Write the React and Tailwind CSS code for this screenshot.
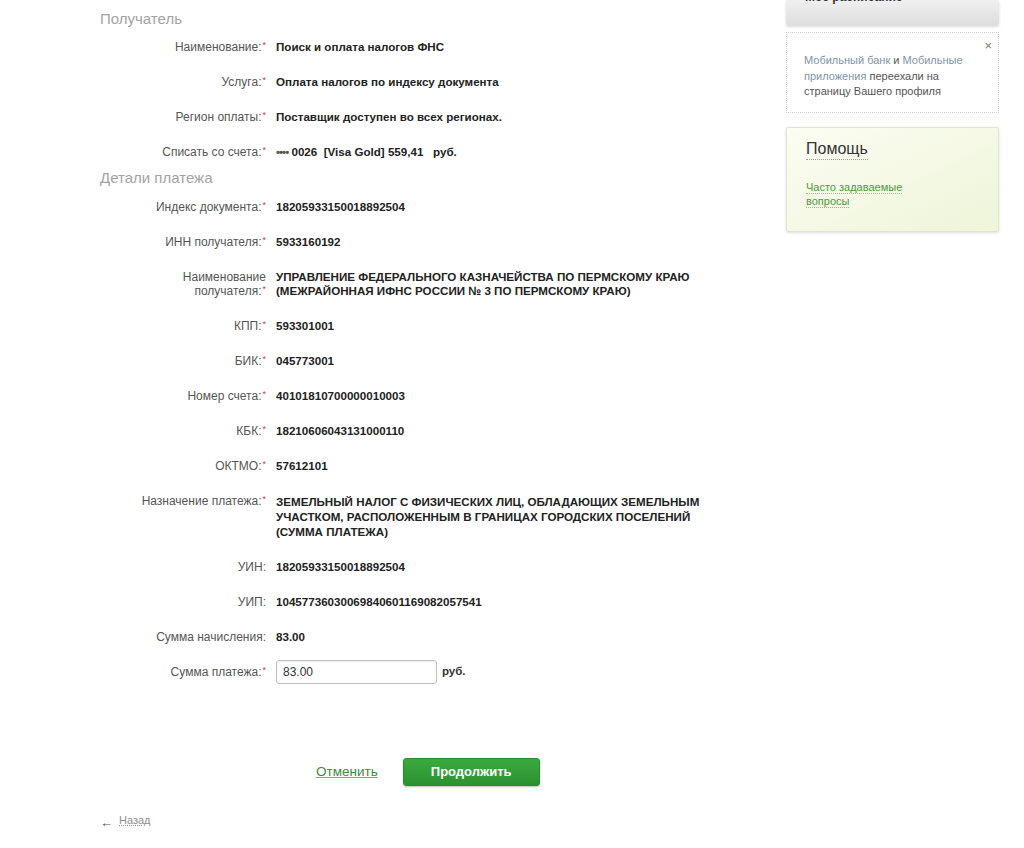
import React from 'react';

const Req = () => <span className="relative -top-[3px] ml-px align-baseline text-[9px] leading-[0] text-[#d23a3a]">*</span>;

const Row = ({ label, req = true, children, lines = 1 }) => (
  <div className="flex items-start">
    <div className="w-[166px] shrink-0 text-right text-[12px] leading-[14px] text-[#555]">
      {label}
      {req && <Req />}
    </div>
    <div
      className={
        'pl-[10px] text-[11.6px] font-bold text-[#222] ' + (lines > 2 ? 'leading-[15px]' : 'leading-[14px]')
      }
    >
      {children}
    </div>
  </div>
);

export default function App() {
  return (
    <div className="min-h-[848px] bg-white font-['Liberation_Sans',Arial,sans-serif]">
      <div className="flex pl-[100px]">
        {/* Main form */}
        <main className="w-[686px] shrink-0">
          <h2 className="pt-[10px] text-[15px] leading-[18px] text-[#a3a3a3]">Получатель</h2>
          <div className="mt-[12px] flex flex-col gap-[21px]">
            <Row label="Наименование:">Поиск и оплата налогов ФНС</Row>
            <Row label="Услуга:">Оплата налогов по индексу документа</Row>
            <Row label="Регион оплаты:">Поставщик доступен во всех регионах.</Row>
            <Row label="Списать со счета:">
              <span className="tracking-[-1px] text-[#555]">••••</span> 0026&nbsp;&nbsp;[Visa Gold] 559,41&nbsp;&nbsp;&nbsp;руб.
            </Row>
          </div>

          <h2 className="mt-[10px] text-[15px] leading-[18px] text-[#a3a3a3]">Детали платежа</h2>
          <div className="mt-[13px] flex flex-col gap-[21px]">
            <Row label="Индекс документа:">18205933150018892504</Row>
            <Row label="ИНН получателя:">5933160192</Row>
            <Row
              label={
                <>
                  Наименование
                  <br />
                  получателя:
                </>
              }
            >
              УПРАВЛЕНИЕ ФЕДЕРАЛЬНОГО КАЗНАЧЕЙСТВА ПО ПЕРМСКОМУ КРАЮ
              <br />
              (МЕЖРАЙОННАЯ ИФНС РОССИИ № 3 ПО ПЕРМСКОМУ КРАЮ)
            </Row>
            <Row label="КПП:">593301001</Row>
            <Row label="БИК:">045773001</Row>
            <Row label="Номер счета:">40101810700000010003</Row>
            <Row label="КБК:">18210606043131000110</Row>
            <Row label="ОКТМО:">57612101</Row>
            <Row label="Назначение платежа:" lines={3}>
              ЗЕМЕЛЬНЫЙ НАЛОГ С ФИЗИЧЕСКИХ ЛИЦ, ОБЛАДАЮЩИХ ЗЕМЕЛЬНЫМ
              <br />
              УЧАСТКОМ, РАСПОЛОЖЕННЫМ В ГРАНИЦАХ ГОРОДСКИХ ПОСЕЛЕНИЙ
              <br />
              (СУММА ПЛАТЕЖА)
            </Row>
            <Row label="УИН:" req={false}>18205933150018892504</Row>
            <Row label="УИП:" req={false}>10457736030069840601169082057541</Row>
            <Row label="Сумма начисления:" req={false}>83.00</Row>
          </div>

          <div className="mt-[16px] flex h-[24px] items-center">
            <div className="w-[166px] shrink-0 text-right text-[12px] leading-[14px] text-[#555]">
              Сумма платежа:
              <Req />
            </div>
            <input
              defaultValue="83.00"
              className="ml-[10px] h-[24px] w-[161px] rounded-[3px] border border-[#c2c2c2] px-[6px] text-[12px] text-[#333] shadow-[inset_0_1px_2px_rgba(0,0,0,0.08)] outline-none"
            />
            <span className="ml-[5px] text-[11.5px] font-bold text-[#333]">руб.</span>
          </div>

          <div className="mt-[74px] flex items-center pl-[216px]">
            <a href="#" className="text-[13.5px] text-[#3c8a3c] underline decoration-[#7aa87a]">
              Отменить
            </a>
            <button className="ml-[25px] h-[28px] w-[137px] rounded-[3px] border border-[#2a8a2f] bg-gradient-to-b from-[#3aa93f] to-[#2b9230] text-[13px] font-bold text-white shadow-[0_1px_2px_rgba(0,0,0,0.25)]">
              Продолжить
            </button>
          </div>

          <div className="mt-[24px] flex items-center gap-[6px] text-[11px] leading-[14px] text-[#8a8f95]">
            <span className="mt-[6px] text-[13px] leading-none text-[#555]">←</span>
            <a href="#" className="underline decoration-dotted">Назад</a>
          </div>
        </main>

        {/* Right column */}
        <aside className="w-[213px] shrink-0">
          <div className="h-[25px] overflow-hidden rounded-b-[2px] bg-gradient-to-b from-[#f0f0f0] to-[#dedede] shadow-[0_2px_3px_rgba(0,0,0,0.15)]">
            <div className="-mt-[11px] pl-[19px] text-[12px] font-bold leading-[16px] text-[#333]">Моё расписание</div>
          </div>

          <div className="relative mt-[7px] h-[81px] border border-dotted border-[#cfcfcf] pl-[17px] pr-[16px] pt-[20px] text-[11px] leading-[15.5px] text-[#555]">
            <span className="absolute right-[6px] top-[6px] text-[13px] leading-none text-[#777]">×</span>
            <p>
              <a href="#" className="text-[#7d95a6]">Мобильный банк</a> и{' '}
              <a href="#" className="text-[#7d95a6]">Мобильные приложения</a> переехали на страницу Вашего профиля
            </p>
          </div>

          <div className="mt-[14px] h-[105px] rounded-[2px] border border-[#e0e6c9] bg-gradient-to-br from-[#fcfdf3] to-[#eef5d8] pl-[19px] pt-[9px] shadow-[0_1px_3px_rgba(0,0,0,0.12)]">
            <div className="inline-block border-b border-dotted border-[#999] text-[16px] leading-[20px] text-[#333]">
              Помощь
            </div>
            <div className="mt-[19px] w-[120px] text-[11px] leading-[14px] text-[#4b9b3d]">
              <a href="#" className="border-b border-dotted border-[#8fbf85]">Часто задаваемые</a>
              <br />
              <a href="#" className="border-b border-dotted border-[#8fbf85]">вопросы</a>
            </div>
          </div>
        </aside>
      </div>
    </div>
  );
}
